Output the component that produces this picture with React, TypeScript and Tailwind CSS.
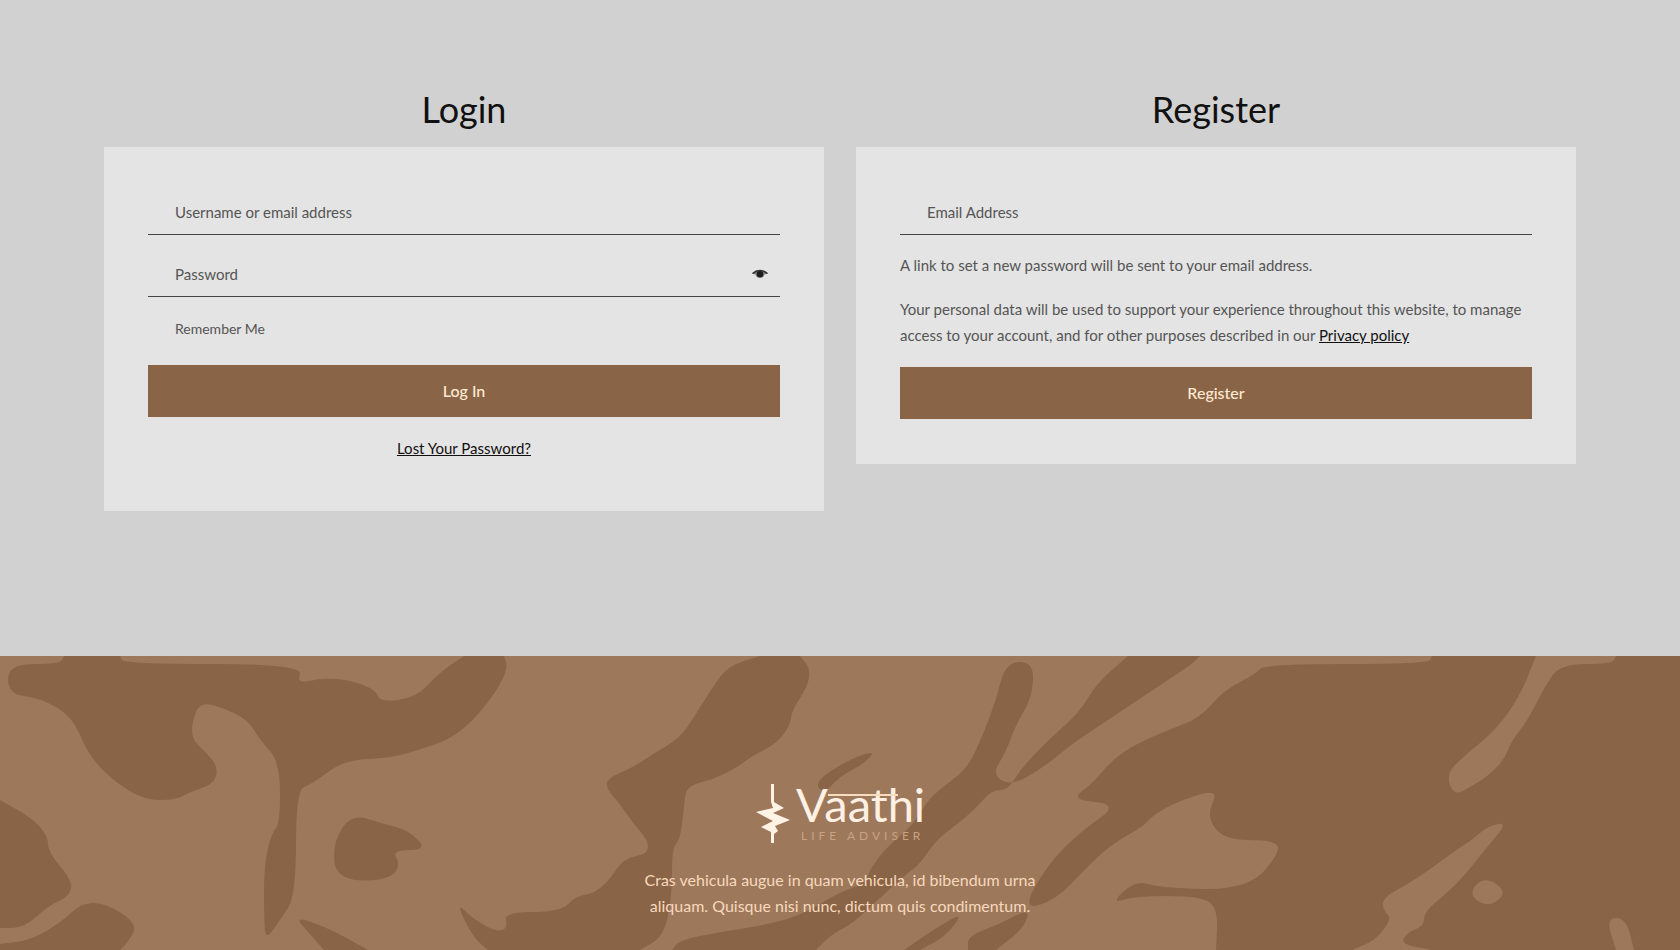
import React from "react";

function Field({
  label,
  type,
  name,
  children,
}: {
  label: string;
  type: string;
  name: string;
  children?: React.ReactNode;
}) {
  return (
    <div className="flex h-[50px] items-center border-b border-[#444] pt-1">
      <input
        type={type}
        name={name}
        aria-label={label}
        placeholder={label}
        className="h-full min-w-0 flex-1 bg-transparent px-[27px] text-[15px] text-[#555] outline-none placeholder:text-[#555]"
      />
      {children}
    </div>
  );
}

function Submit({ children }: { children: React.ReactNode }) {
  return (
    <button
      type="submit"
      className="h-[52px] w-full cursor-pointer bg-[#8a6446] text-base font-medium text-[#ffe9d2] hover:bg-[#765034]"
    >
      {children}
    </button>
  );
}

function Panel({ title, children }: { title: string; children: React.ReactNode }) {
  return (
    <section className="flex-1">
      <h2 className="text-center text-4xl leading-[44px] text-[#111]">{title}</h2>
      <div className="mt-4 bg-[#e4e4e4] px-11 pt-[38px] pb-[45px]">{children}</div>
    </section>
  );
}

function EyeIcon() {
  return (
    <svg viewBox="0 0 16 10" className="h-[10px] w-4" aria-hidden="true">
      <path d="M0 4.500Q3.500 1 8 1T16 4.500L12.500 5.500Q11.500 9 8 9T3.500 5.500Z" fill="#777" />
      <circle cx="8" cy="5" r="3.200" fill="#1c1c1c" />
      <path d="M.5 4.500Q3.800 1.500 8 1.500T15.500 4.500" fill="none" stroke="#333" strokeWidth="1.400" />
    </svg>
  );
}

type Point = [number, number];

const onEdge = ([x, y]: Point) => x <= 0 || x >= 1680 || y <= 0 || y >= 294;

/** Turns a list of outline points into a closed path with rounded corners; points on the frame stay sharp. */
function vein(outline: string) {
  const pts = outline.split(" ").map((p) => p.split(",").map(Number) as Point);
  const n = pts.length;
  const mid = (a: Point, b: Point) => `${(a[0] + b[0]) / 2} ${(a[1] + b[1]) / 2}`;
  let d = `M${mid(pts[n - 1], pts[0])}`;
  pts.forEach((p, i) => {
    const end = mid(p, pts[(i + 1) % n]);
    d += onEdge(p) ? `L${p[0]} ${p[1]}L${end}` : `Q${p[0]} ${p[1]} ${end}`;
  });
  return d + "Z";
}

const DARK = [
  "8,8 60,8 64,0 120,0 124,8 304,8 296,28 322,22 350,24 376,34 380,46 416,42 440,16 464,0 504,0 508,12 496,36 472,66 448,84 424,92 392,102 344,104 312,128 296,134 296,240 280,264 266,284 264,264 264,208 272,176 280,168 280,106 260,84 248,64 224,52 200,46 192,66 192,84 208,98 218,112 214,128 190,136 176,144 144,144 112,124 88,98 72,60 40,42 8,38",
  "0,144 32,162 48,180 48,196 72,224 70,240 48,250 24,272 0,272",
  "0,294 0,288 32,284 64,264 80,248 104,246 138,268 128,286 120,294",
  "352,158 384,168 408,174 428,194 392,194 400,208 392,222 356,226 334,216 334,184",
  "296,262 312,266 336,276 368,294 324,294 308,276",
  "760,0 800,0 810,12 808,30 792,54 790,70 776,88 752,100 736,112 712,124 686,130 684,152 680,184 672,192 672,240 664,280 640,294 488,294 472,280 456,246 472,262 496,276 508,272 504,256 560,256 576,240 592,238 608,226 624,202 648,198 648,184 632,166 620,148 606,132 608,122 632,112 656,96 680,82 696,58 712,32 728,10",
  "1006,6 1034,6 1032,42 1016,68 1006,96 992,118 1010,130 1040,114 1072,88 1096,72 1120,56 1144,40 1168,24 1192,8 1200,0 1128,0 1096,28 1080,56 1048,84 1020,114 1008,134 992,134 976,152 960,166 936,184 920,208 904,220 880,242 852,268 832,278 816,294 672,294 680,284 720,276 760,270 800,260 840,236 864,228 872,210 888,190 912,170 928,144 944,130 968,112 984,76 996,44",
  "1432,0 1680,0 1680,294 1216,294 1218,252 1200,240 1136,240 1110,248 1136,224 1160,232 1248,234 1282,194 1272,184 1224,184 1206,160 1220,132 1176,146 1152,160 1144,170 1112,188 1088,210 1056,244 1022,254 1048,208 1080,176 1120,148 1070,144 1092,128 1112,104 1136,88 1168,74 1200,62 1224,34 1256,18 1264,8 1428,8",
  "904,294 936,272 964,256 946,280 920,294",
  "968,294 968,280 1000,268 1030,252 1024,272 996,294",
  "814,126 848,104 876,94 864,108 840,120 824,138",
];

const LIGHT = [
  "1536,0 1616,0 1612,8 1560,8 1544,32 1528,64 1512,84 1504,104 1488,120 1472,130 1454,140 1446,118 1464,100 1496,74 1520,40",
  "1508,166 1488,170 1472,184 1456,194 1432,212 1408,228 1382,242 1384,256 1392,262 1376,284 1352,294 1432,294 1400,288 1408,276 1424,270 1424,256 1448,236 1464,220 1488,190",
  "1468,238 1484,220 1508,236 1488,252",
  "1606,262 1626,262 1634,294 1616,294",
];

function Marble() {
  return (
    <svg
      viewBox="0 0 1680 294"
      preserveAspectRatio="xMidYMin slice"
      className="absolute inset-0 h-full w-full"
      aria-hidden="true"
    >
      <g fill="#8a6446">
        {DARK.map((o) => (
          <path key={o} d={vein(o)} />
        ))}
      </g>
      <g fill="#9e785b">
        {LIGHT.map((o) => (
          <path key={o} d={vein(o)} />
        ))}
      </g>
    </svg>
  );
}

function Logo() {
  return (
    <svg viewBox="0 0 172 62" className="h-[62px] w-[172px] overflow-visible" role="img" aria-label="Vaathi Life Adviser">
      <path
        d="M17 0H20V18L30 24L19 29L36 36L21 42L24 47L20 50V59H17V48L7 43L19 37L2 28L19 24L17 18Z"
        fill="#fff3e6"
      />
      <text x="42" y="38" fontSize="47" fill="#fff0e4" fontFamily="Lato, sans-serif">
        Vaathi
      </text>
      <path d="M74 11H144" stroke="#f8dcc0" strokeWidth="2" />
      <text x="47" y="56" fontSize="12" fill="#c9a283" fontFamily="Lato, sans-serif" className="tracking-[4px]">
        LIFE ADVISER
      </text>
    </svg>
  );
}

export default function App() {
  return (
    <div className="flex min-h-screen flex-col bg-[#d1d1d1] font-[Lato,sans-serif] text-[15px] text-[#555]">
      <main className="flex items-start gap-8 px-[104px] pt-[87px] pb-[145px]">
        <Panel title="Login">
          <form onSubmit={(e) => e.preventDefault()}>
            <Field label="Username or email address" type="text" name="username" />
            <div className="mt-3">
              <Field label="Password" type="password" name="password">
                <button type="button" aria-label="Show password" className="mr-3">
                  <EyeIcon />
                </button>
              </Field>
            </div>
            <label className="mt-5 mb-6 block pl-[27px] text-sm leading-6">
              <input type="checkbox" name="remember" className="sr-only" />
              Remember Me
            </label>
            <Submit>Log In</Submit>
            <p className="mt-[18px] mb-[5px] text-center leading-[26px]">
              <a href="#lost-password" className="text-[#111] underline">
                Lost Your Password?
              </a>
            </p>
          </form>
        </Panel>
        <Panel title="Register">
          <form onSubmit={(e) => e.preventDefault()}>
            <Field label="Email Address" type="email" name="email" />
            <p className="mt-[17px] leading-[26px]">A link to set a new password will be sent to your email address.</p>
            <p className="mt-[18px] mb-[19px] leading-[26px]">
              Your personal data will be used to support your experience throughout this website, to manage access to
              your account, and for other purposes described in our{" "}
              <a href="#privacy" className="text-[#111] underline">
                Privacy policy
              </a>
            </p>
            <Submit>Register</Submit>
          </form>
        </Panel>
      </main>
      <footer className="relative flex-1 bg-[#9e785b]">
        <Marble />
        <div className="relative flex flex-col items-center pt-[128px]">
          <a href="#home">
            <Logo />
          </a>
          <p className="mt-[21px] w-[400px] text-center text-base leading-[26px] text-[#f6d9bd]">
            Cras vehicula augue in quam vehicula, id bibendum urna aliquam. Quisque nisi nunc, dictum quis condimentum.
          </p>
        </div>
      </footer>
    </div>
  );
}
